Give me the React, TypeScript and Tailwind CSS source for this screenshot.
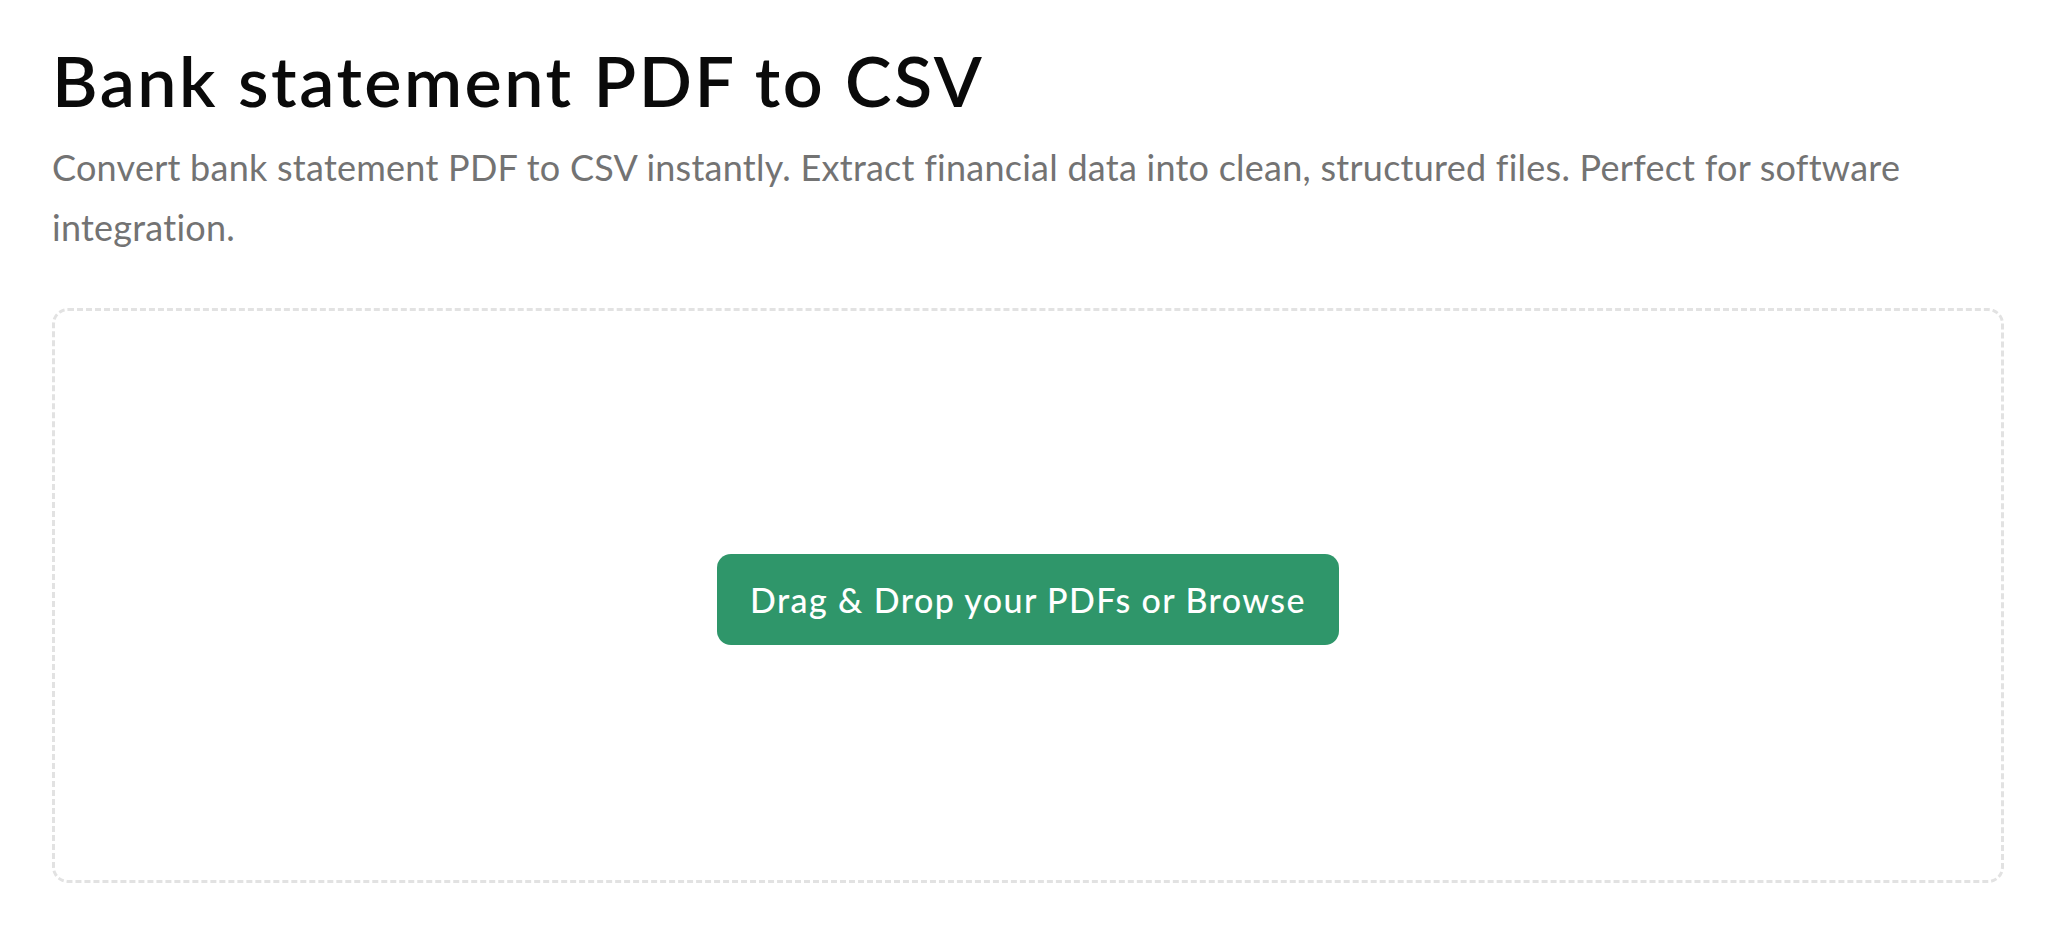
import React from "react";

export default function App() {
  return (
    <div
      className="min-h-screen bg-white px-[52px] pt-[45px]"
      style={{ fontFamily: "Lato, 'Noto Sans', sans-serif" }}
    >
      <h1 className="text-[70px] leading-none font-semibold tracking-[2.5px] text-[#0a0a0a]">
        Bank statement PDF to CSV
      </h1>
      <p className="mt-[22px] text-[36px] leading-[60px] tracking-[0.25px] text-[#737373]">
        Convert bank statement PDF to CSV instantly. Extract financial data into clean, structured files. Perfect for software integration.
      </p>
      <div className="mt-[51px] flex h-[575px] items-center justify-center rounded-[16px] border-[3px] border-dashed border-[#e2e2e2] pt-[8px]">
        <button className="flex h-[91px] items-center rounded-[14px] bg-[#2f966a] px-[33px] text-[34px] font-medium tracking-[1.4px] text-white">
          Drag &amp; Drop your PDFs or Browse
        </button>
      </div>
    </div>
  );
}
